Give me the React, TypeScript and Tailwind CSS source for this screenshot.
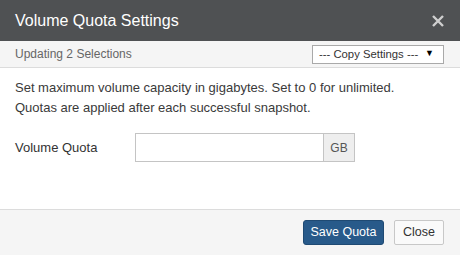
import React from "react";

const App = () => {
  return (
    <div
      className="w-[460px] h-[255px] bg-white flex flex-col text-[#333]"
      style={{ fontFamily: '"Liberation Sans", Arial, sans-serif' }}
    >
      <div className="h-[41px] bg-[#4f5153] pl-[15px] pr-[16px] flex items-center justify-between">
        <div className="text-[16px] text-white">Volume Quota Settings</div>
        <svg width="12" height="12" viewBox="0 0 12 12" aria-hidden>
          <path d="M1 1L11 11M11 1L1 11" stroke="#cfcfcf" strokeWidth="2.4" />
        </svg>
      </div>
      <div className="h-[27px] bg-[#f5f5f5] border-b border-[#dcdcdc] pl-[15px] pr-[16px] flex items-center justify-between">
        <div className="text-[12px] text-[#666]">Updating 2 Selections</div>
        <div className="w-[132px] h-[19px] bg-white border border-[#a9a9a9] flex items-center justify-between pl-[6px] pr-[9px] text-[11.3px] text-[#333]">
          <span>--- Copy Settings ---</span>
          <span className="text-[9px] text-black">▼</span>
        </div>
      </div>
      <div className="flex-1 px-[15px] pt-[10px]">
        <p className="text-[13px] leading-[20px] text-[#3a3a3a]">
          Set maximum volume capacity in gigabytes. Set to 0 for unlimited.
          <br />
          Quotas are applied after each successful snapshot.
        </p>
        <div className="flex items-center mt-[15px]">
          <div className="w-[120px] text-[13px]">Volume Quota</div>
          <div className="flex h-[29px]">
            <div className="w-[188px] h-full bg-white border border-[#c4c4c4] border-r-0" />
            <div className="w-[32px] h-full bg-[#eeeeee] border border-[#c4c4c4] flex items-center justify-center text-[12px] text-[#555]">
              GB
            </div>
          </div>
        </div>
      </div>
      <div className="h-[46px] bg-[#f5f5f5] border-t border-[#dcdcdc] flex items-center justify-end gap-[10px] pr-[16px] pb-[1px]">
        <button className="w-[81px] h-[25px] bg-[#285a8a] border border-[#1f4a73] rounded-[3px] text-white text-[12.5px]">
          Save Quota
        </button>
        <button className="w-[50px] h-[25px] bg-[#fafafa] border border-[#c8c8c8] rounded-[2px] text-[#333] text-[12.5px]">
          Close
        </button>
      </div>
    </div>
  );
};

export default App;
